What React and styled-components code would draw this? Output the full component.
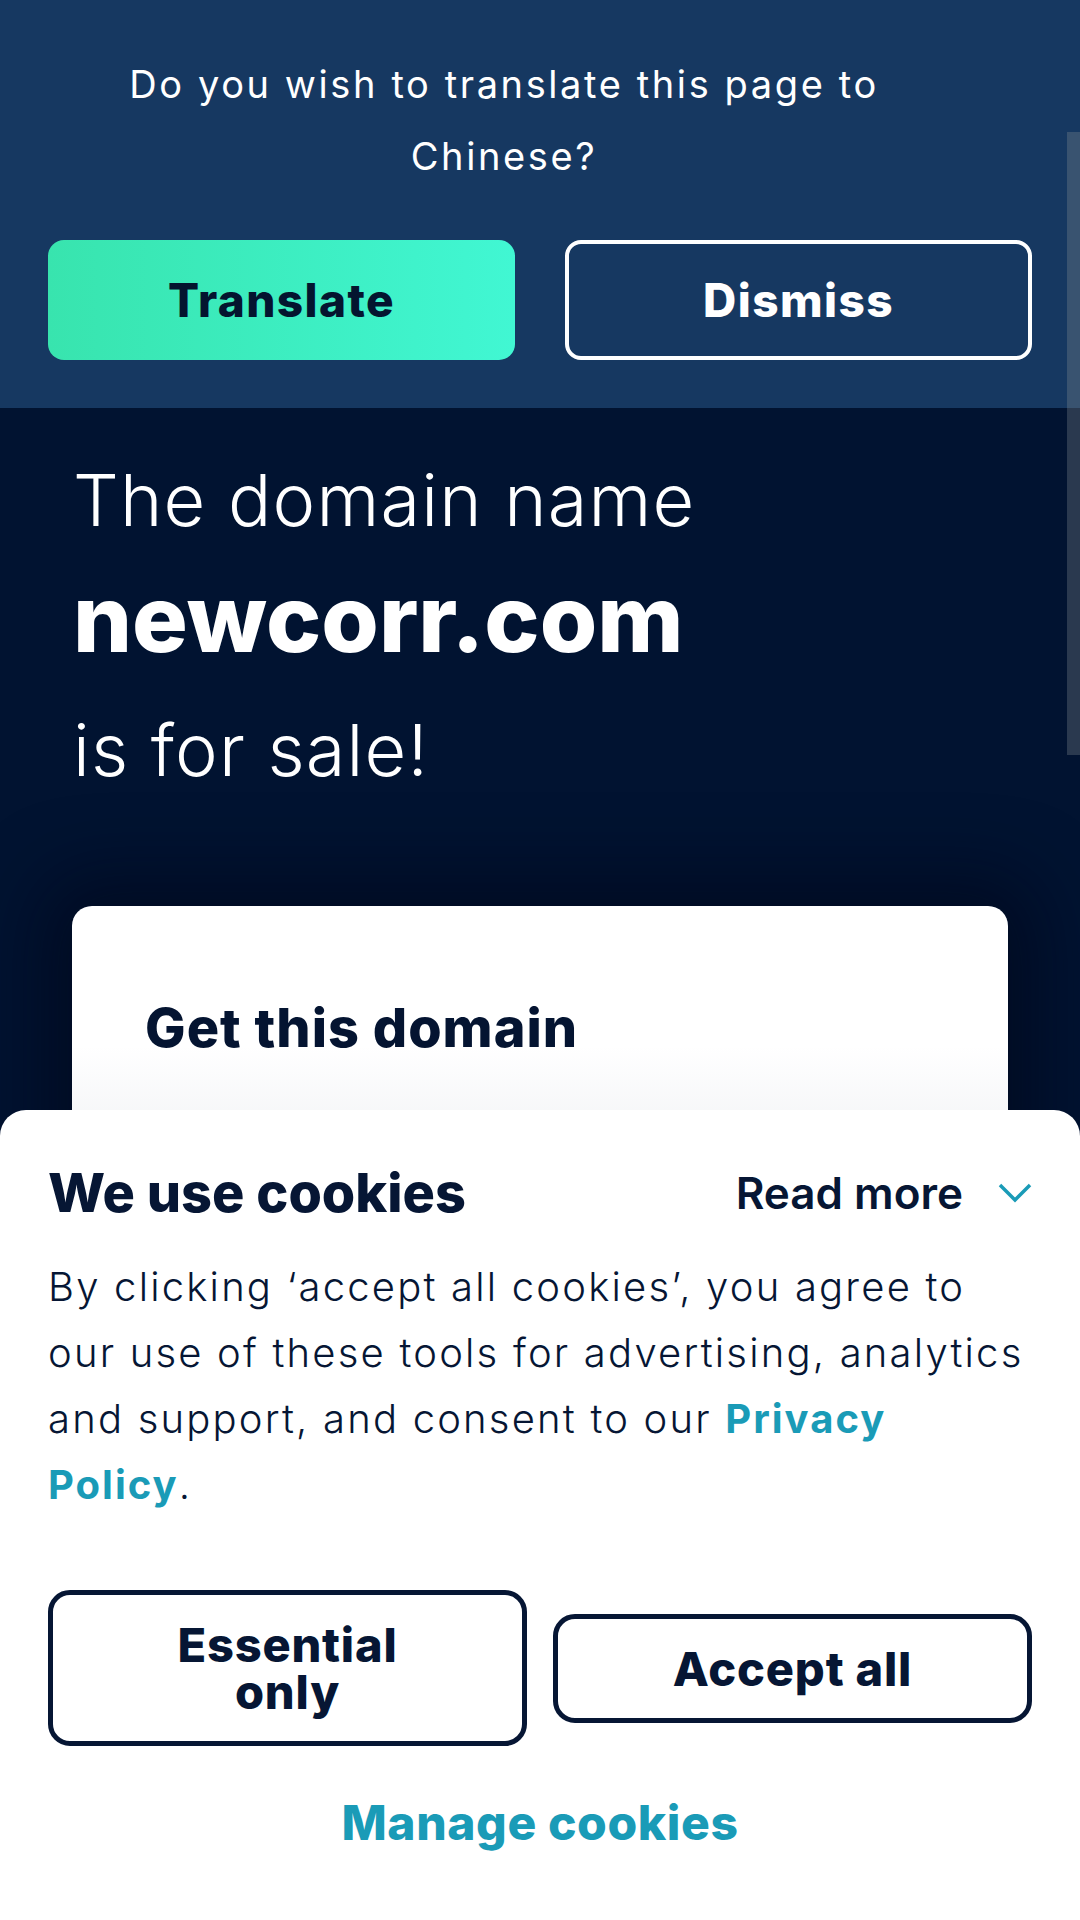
import React from 'react';
import styled, { createGlobalStyle } from 'styled-components';

const GlobalStyle = createGlobalStyle`
  html, body {
    margin: 0;
    padding: 0;
  }
  body {
    font-family: Inter, "Noto Sans", "Liberation Sans", sans-serif;
    background: #011331;
  }
  * {
    box-sizing: border-box;
  }
`;

const Page = styled.div`
  position: relative;
  height: 1920px;
  overflow: hidden;
  background: #011331;
`;

const TranslateBar = styled.section`
  background: #163861;
  padding: 48px 48px;
`;

const Prompt = styled.p`
  margin: 0 118px 48px 46px;
  text-align: center;
  color: #ffffff;
  font-size: 38px;
  line-height: 72px;
  font-weight: 400;
  letter-spacing: 2.6px;
`;

const ButtonRow = styled.div`
  display: grid;
  grid-template-columns: 1fr 1fr;
  gap: 50px;
`;

const BarButton = styled.button`
  height: 120px;
  border-radius: 16px;
  font-family: inherit;
  font-size: 46px;
  font-weight: 800;
  letter-spacing: 1.4px;
  cursor: pointer;
  background: ${(p) => (p.$primary ? 'linear-gradient(90deg, #38e4ae, #41f7d3)' : 'transparent')};
  color: ${(p) => (p.$primary ? '#04152f' : '#ffffff')};
  border: ${(p) => (p.$primary ? 'none' : '4px solid #ffffff')};
`;

const Hero = styled.section`
  padding: 29px 73px 0;
`;

const Headline = styled.h1`
  margin: 0;
  color: #ffffff;
`;

const HeadLine = styled.span`
  display: block;
  font-size: ${(p) => (p.$strong ? '93px' : '72px')};
  font-weight: ${(p) => (p.$strong ? 800 : 300)};
  line-height: ${(p) => (p.$strong ? '110px' : '126px')};
  margin-bottom: ${(p) => (p.$strong ? '14px' : '0')};
  letter-spacing: ${(p) => (p.$strong ? '0' : '1.2px')};
`;

const Card = styled.div`
  margin: 93px 72px 0;
  min-height: 500px;
  padding: 92px 73px;
  border-radius: 20px;
  background: linear-gradient(180deg, #ffffff 0, #ffffff 140px, #f5f6f8 220px);
  box-shadow: 0 0 70px 30px rgba(0, 6, 24, 0.55);
`;

const CardTitle = styled.h2`
  margin: 0;
  color: #041431;
  font-size: 54px;
  line-height: 60px;
  font-weight: 800;
  letter-spacing: 1px;
`;

const CookieSheet = styled.aside`
  position: absolute;
  left: 0;
  right: 0;
  bottom: 0;
  height: 810px;
  padding: 51px 48px 0;
  background: #ffffff;
  border-radius: 26px 26px 0 0;
  color: #061634;
`;

const SheetHeader = styled.div`
  display: flex;
  justify-content: space-between;
  align-items: center;
`;

const SheetTitle = styled.h3`
  margin: 0;
  font-size: 54px;
  line-height: 64px;
  font-weight: 800;
`;

const ReadMore = styled.button`
  display: flex;
  align-items: center;
  gap: 35px;
  padding: 0;
  border: none;
  background: none;
  color: #061634;
  font-family: inherit;
  font-size: 44px;
  font-weight: 600;
  cursor: pointer;
`;

const Body = styled.p`
  margin: 29px 0 0;
  font-size: 40px;
  line-height: 66px;
  font-weight: 300;
  letter-spacing: 2.2px;
`;

const Link = styled.a`
  color: #1a9bb7;
  font-weight: 700;
  letter-spacing: 2px;
  text-decoration: none;
`;

const ChoiceRow = styled.div`
  display: flex;
  align-items: center;
  gap: 26px;
  margin-top: 72px;
`;

const ChoiceButton = styled.button`
  flex: 1;
  padding: 26px 20px;
  border: 5px solid #061634;
  border-radius: 22px;
  background: #ffffff;
  color: #061634;
  font-family: inherit;
  font-size: 47px;
  line-height: 47px;
  font-weight: 800;
  letter-spacing: 0.8px;
  cursor: pointer;
`;

const ManageLink = styled.a`
  display: block;
  margin-top: 51px;
  text-align: center;
  color: #1a9bb7;
  font-size: 48px;
  line-height: 52px;
  font-weight: 800;
  letter-spacing: 0.6px;
  text-decoration: none;
`;

const Scrollbar = styled.div`
  position: absolute;
  top: 132px;
  right: 0;
  width: 13px;
  height: 623px;
  background: rgba(140, 145, 150, 0.3);
`;

const Chevron = () => (
  <svg width="34" height="20" viewBox="0 0 34 20" fill="none">
    <path d="M2 2 L17 17 L32 2" stroke="#1a9bb7" strokeWidth="3.5" />
  </svg>
);

export default function App() {
  return (
    <Page>
      <GlobalStyle />
      <TranslateBar>
        <Prompt>Do you wish to translate this page to Chinese?</Prompt>
        <ButtonRow>
          <BarButton $primary>Translate</BarButton>
          <BarButton>Dismiss</BarButton>
        </ButtonRow>
      </TranslateBar>
      <Hero>
        <Headline>
          <HeadLine>The domain name</HeadLine>
          <HeadLine $strong>newcorr.com</HeadLine>
          <HeadLine>is for sale!</HeadLine>
        </Headline>
      </Hero>
      <Card>
        <CardTitle>Get this domain</CardTitle>
      </Card>
      <Scrollbar />
      <CookieSheet>
        <SheetHeader>
          <SheetTitle>We use cookies</SheetTitle>
          <ReadMore>
            Read more
            <Chevron />
          </ReadMore>
        </SheetHeader>
        <Body>
          By clicking ‘accept all cookies’, you agree to our use of these tools for advertising,
          analytics and support, and consent to our <Link href="#">Privacy Policy</Link>.
        </Body>
        <ChoiceRow>
          <ChoiceButton>
            Essential
            <br />
            only
          </ChoiceButton>
          <ChoiceButton>Accept all</ChoiceButton>
        </ChoiceRow>
        <ManageLink href="#">Manage cookies</ManageLink>
      </CookieSheet>
    </Page>
  );
}
